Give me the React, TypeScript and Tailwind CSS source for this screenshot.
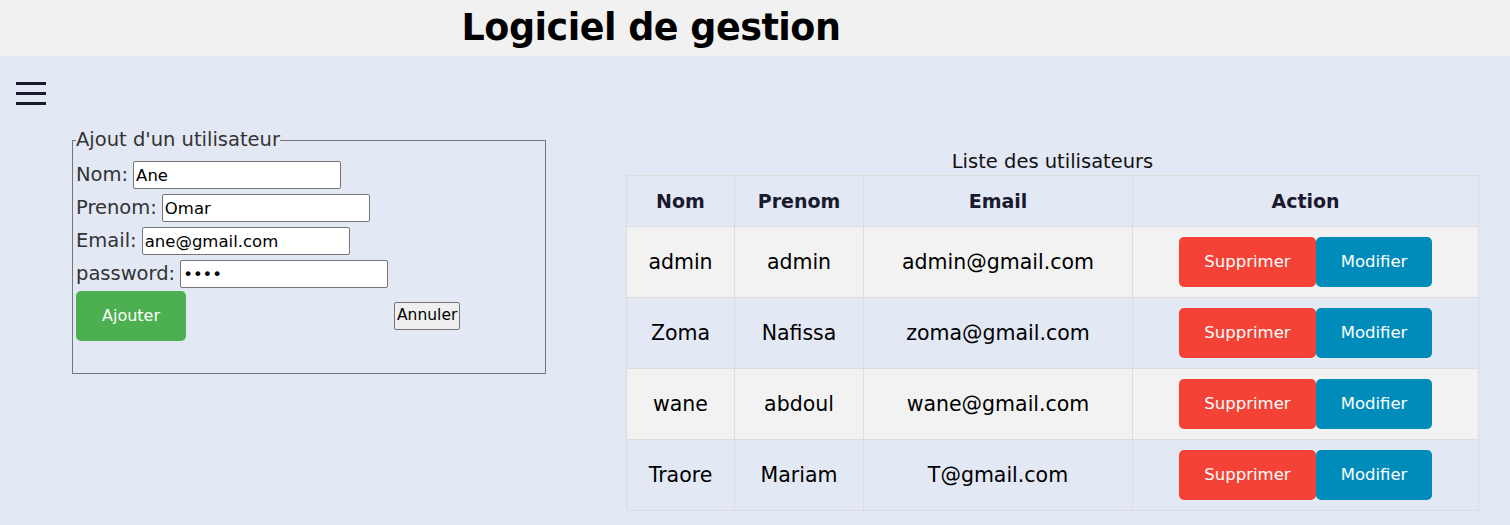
import React from "react";

const users = [
  { nom: "admin", prenom: "admin", email: "admin@gmail.com" },
  { nom: "Zoma", prenom: "Nafissa", email: "zoma@gmail.com" },
  { nom: "wane", prenom: "abdoul", email: "wane@gmail.com" },
  { nom: "Traore", prenom: "Mariam", email: "T@gmail.com" },
];

function Field({ label, value, type = "text" }: { label: string; value: string; type?: string }) {
  return (
    <div className="flex items-center h-[28px]">
      <span className="text-[19.5px] text-[#333] mr-[5px] leading-none">{label}</span>
      <input
        type={type}
        readOnly
        value={value}
        className="w-[208px] h-[28px] border border-[#767676] rounded-[2px] bg-white px-[2px] text-[16.5px] text-black outline-none"
      />
    </div>
  );
}

export default function App() {
  return (
    <div className="min-h-[525px] bg-[#e3e8f5] font-['DejaVu_Sans',sans-serif] text-black">
      <header className="h-[56px] bg-[#f1f1f1] flex items-center">
        <div className="w-[1302px] text-center">
          <h1 className="text-[36.5px] font-bold leading-none tracking-[-0.5px]">Logiciel de gestion</h1>
        </div>
      </header>
      <div className="pl-[16px] pt-[26px]">
        <div className="flex flex-col gap-[7px] w-[30px]">
          <span className="block h-[3px] bg-[#1a1a2e]" />
          <span className="block h-[3px] bg-[#1a1a2e]" />
          <span className="block h-[3px] bg-[#1a1a2e]" />
        </div>
      </div>
      <div className="flex items-start pl-[72px] pt-[26px]">
        <fieldset className="w-[474px] h-[243px] border border-[#767676] px-[3px] pb-[30px]">
          <legend className="text-[19.5px] text-[#333] px-0 leading-[18px]">Ajout d'un utilisateur</legend>
          <div className="flex flex-col gap-[5px] mt-[12px]">
            <Field label="Nom:" value="Ane" />
            <Field label="Prenom:" value="Omar" />
            <Field label="Email:" value="ane@gmail.com" />
            <Field label="password:" value="Omar" type="password" />
          </div>
          <div className="flex items-center mt-[3px]">
            <button className="w-[110px] h-[50px] rounded-[5px] bg-[#4caf50] text-white text-[16px]">Ajouter</button>
            <button className="ml-[208px] h-[28px] px-[2px] border border-[#767676] rounded-[2px] bg-[#efefef] text-[15.5px] text-black">Annuler</button>
          </div>
        </fieldset>
        <div className="ml-[80px] pt-[17px]">
          <div className="text-center text-[19.5px] text-[#111] leading-[27px]">Liste des utilisateurs</div>
          <table className="w-[852px] table-fixed border-collapse">
            <colgroup>
              <col className="w-[108px]" />
              <col className="w-[129px]" />
              <col className="w-[269px]" />
              <col className="w-[346px]" />
            </colgroup>
            <thead>
              <tr className="h-[51px]">
                {["Nom", "Prenom", "Email", "Action"].map((h) => (
                  <th key={h} className="border border-[#dddddd] text-[19px] font-bold text-[#1a1a2e] text-center">
                    {h}
                  </th>
                ))}
              </tr>
            </thead>
            <tbody>
              {users.map((u, i) => (
                <tr key={u.email} className={`h-[71px] ${i % 2 === 0 ? "bg-[#f2f2f2]" : ""}`}>
                  <td className="border border-[#dddddd] text-center text-[20.5px]">{u.nom}</td>
                  <td className="border border-[#dddddd] text-center text-[20.5px]">{u.prenom}</td>
                  <td className="border border-[#dddddd] text-center text-[20.5px]">{u.email}</td>
                  <td className="border border-[#dddddd] text-center">
                    <div className="flex justify-center">
                      <button className="w-[137px] h-[50px] rounded-[5px] bg-[#f44336] text-white text-[16.5px]">Supprimer</button>
                      <button className="w-[116px] h-[50px] rounded-[5px] bg-[#008cba] text-white text-[16.5px]">Modifier</button>
                    </div>
                  </td>
                </tr>
              ))}
            </tbody>
          </table>
        </div>
      </div>
    </div>
  );
}
